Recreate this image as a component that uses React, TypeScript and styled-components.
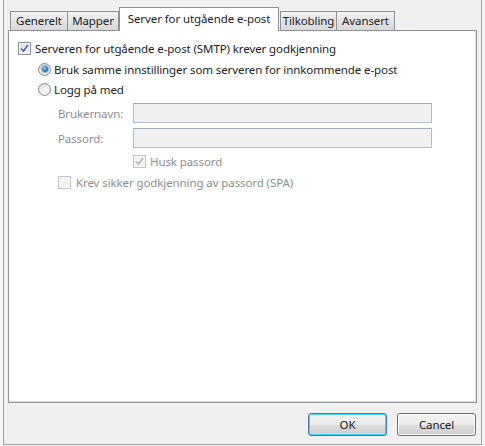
import React from "react";
import styled, { createGlobalStyle, css } from "styled-components";

const Global = createGlobalStyle`
  html, body { margin: 0; padding: 0; background: #f4f4f4; }
  * { box-sizing: border-box; }
`;

const FONT = `"Noto Sans", "Open Sans", sans-serif`;

const Root = styled.div`
  width: 485px;
  height: 446px;
  padding: 0 3px 1px 3px;
  background: #f5f5f5;
  font-family: ${FONT};
  font-size: 11.5px;
  letter-spacing: -0.1px;
  color: #222;
`;

const Window = styled.div`
  height: 100%;
  display: flex;
  flex-direction: column;
  background: #f0f0f0;
  border: 1px solid #a2a2a2;
  border-top: none;
`;

const TabRow = styled.div`
  display: flex;
  align-items: flex-end;
  height: 30px;
  padding: 7px 0 0 6px;
  position: relative;
  z-index: 1;
`;

const Tab = styled.div<{ $w: number; $active?: boolean }>`
  width: ${(p) => p.$w}px;
  height: 19px;
  display: flex;
  align-items: center;
  justify-content: center;
  border: 1px solid #8f9297;
  border-bottom: none;
  margin-right: -1px;
  background: linear-gradient(#f2f2f2, #e4e4e4 50%, #d9d9d9);
  color: #222;
  padding-bottom: 1px;
  ${(p) =>
    p.$active &&
    css`
      height: 24px;
      margin: 0 1px -1px 1px;
      background: #fff;
      padding-bottom: 3px;
    `}
`;

const Panel = styled.div`
  flex: 1;
  margin: 0 4px;
  background: #fff;
  border: 1px solid #8f9297;
  box-shadow: inset -1px -1px 0 #e2e2e2;
  padding: 7px 9px 0 9px;
  display: flex;
  flex-direction: column;
`;

const Row = styled.div<{ $indent?: number; $mt?: number }>`
  display: flex;
  align-items: center;
  height: 20px;
  padding-left: ${(p) => p.$indent ?? 0}px;
  margin-top: ${(p) => p.$mt ?? 0}px;
`;

const Label = styled.span<{ $disabled?: boolean; $gap?: number }>`
  margin-left: ${(p) => p.$gap ?? 4}px;
  color: ${(p) => (p.$disabled ? "#8e8e8e" : "#222")};
  white-space: nowrap;
`;

const FieldLabel = styled.span`
  width: 75px;
  color: #8e8e8e;
`;

const Field = styled.div`
  width: 299px;
  height: 20px;
  background: #f0f0f0;
  border: 1px solid #b4bcc7;
  border-top-color: #a3abb7;
`;

const Box = styled.span<{ $disabled?: boolean }>`
  width: 13px;
  height: 13px;
  flex: none;
  display: inline-flex;
  align-items: center;
  justify-content: center;
  border: 1px solid ${(p) => (p.$disabled ? "#c4c4c4" : "#8e8f8f")};
  background: ${(p) =>
    p.$disabled ? "#f4f4f4" : "linear-gradient(135deg, #dcdcdc, #fbfbfb)"};
  box-shadow: inset 0 0 0 1px ${(p) => (p.$disabled ? "#f6f6f6" : "#f4f4f4")};
`;

const Radio = styled.span<{ $on?: boolean }>`
  width: 13px;
  height: 13px;
  flex: none;
  border-radius: 50%;
  border: 1px solid #8a8a8a;
  background: radial-gradient(circle at 60% 65%, #ffffff, #d6d6d6);
  display: inline-flex;
  align-items: center;
  justify-content: center;
  &::after {
    content: "";
    display: ${(p) => (p.$on ? "block" : "none")};
    width: 6px;
    height: 6px;
    border-radius: 50%;
    background: radial-gradient(circle at 40% 35%, #8fd0f5, #1f63a8 70%);
    box-shadow: 0 0 1px 1px #7fb8e0;
  }
`;

const Footer = styled.div`
  display: flex;
  justify-content: flex-end;
  gap: 10px;
  padding: 10px 5px 8px 0;
`;

const Button = styled.button<{ $default?: boolean }>`
  width: 79px;
  height: 23px;
  font-family: ${FONT};
  font-size: 11.5px;
  letter-spacing: -0.1px;
  color: #222;
  border-radius: 3px;
  border: 1px solid ${(p) => (p.$default ? "#3d7bad" : "#707070")};
  background: linear-gradient(#f3f3f3, #ebebeb 50%, #dddddd 50%, #cfcfcf);
  box-shadow: inset 0 0 0 1px
    ${(p) => (p.$default ? "#48d3fa" : "#fbfbfb")};
  padding: 0;
`;

const Check = ({ disabled }: { disabled?: boolean }) => (
  <svg width="9" height="9" viewBox="0 0 9 9">
    <path
      d="M1 4.5 L3.5 7 L8 1"
      fill="none"
      stroke={disabled ? "#b4b4b4" : "#4b5f92"}
      strokeWidth="1.6"
    />
  </svg>
);

export default function App() {
  return (
    <Root>
      <Global />
      <Window>
        <TabRow>
          <Tab $w={58}>Generelt</Tab>
          <Tab $w={52}>Mapper</Tab>
          <Tab $w={160} $active>
            Server for utgående e-post
          </Tab>
          <Tab $w={57}>Tilkobling</Tab>
          <Tab $w={59}>Avansert</Tab>
        </TabRow>
        <Panel>
          <Row>
            <Box>
              <Check />
            </Box>
            <Label>Serveren for utgående e-post (SMTP) krever godkjenning</Label>
          </Row>
          <Row $indent={20} $mt={1}>
            <Radio $on />
            <Label $gap={3}>Bruk samme innstillinger som serveren for innkommende e-post</Label>
          </Row>
          <Row $indent={20}>
            <Radio />
            <Label $gap={3}>Logg på med</Label>
          </Row>
          <Row $indent={40} $mt={4}>
            <FieldLabel>Brukernavn:</FieldLabel>
            <Field />
          </Row>
          <Row $indent={40} $mt={5}>
            <FieldLabel>Passord:</FieldLabel>
            <Field />
          </Row>
          <Row $indent={115} $mt={3}>
            <Box $disabled>
              <Check disabled />
            </Box>
            <Label $disabled>Husk passord</Label>
          </Row>
          <Row $indent={40} $mt={1}>
            <Box $disabled />
            <Label $disabled $gap={5}>
              Krev sikker godkjenning av passord (SPA)
            </Label>
          </Row>
        </Panel>
        <Footer>
          <Button $default>OK</Button>
          <Button>Cancel</Button>
        </Footer>
      </Window>
    </Root>
  );
}
